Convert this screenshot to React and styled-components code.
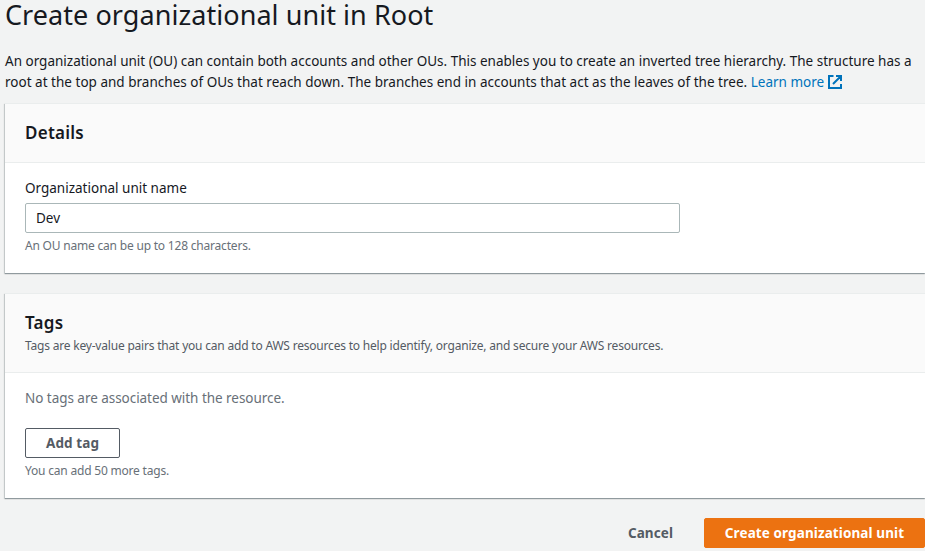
import React from "react";
import styled, { createGlobalStyle } from "styled-components";

const Global = createGlobalStyle`
  * { box-sizing: border-box; }
  html, body { margin: 0; background: #f2f3f3; }
  body { font-family: "Noto Sans", sans-serif; font-size: 13.5px; line-height: 22px; color: #16191f; }
  h1, h2, p { margin: 0; }
`;
const Page = styled.main`
  width: 925px; height: 551px; padding-left: 5px; background: #f2f3f3;
`;
const Title = styled.h1`
  height: 51px; font-size: 27px; line-height: 29px; font-weight: 400; white-space: nowrap;
  letter-spacing: 0.06px;
`;
const Intro = styled.p`
  height: 52px; line-height: 21px;
`;
const Line = styled.span`
  display: block; white-space: nowrap; letter-spacing: ${(p) => p.$ls || 0}px;
`;
const Link = styled.a`
  color: #0073bb; text-decoration: none;
  svg { vertical-align: -2px; margin-left: 4px; }
`;
const Panel = styled.section`
  height: ${(p) => p.$h}px; margin-bottom: 20px; background: #fff;
  border-top: 1px solid #eaeded; box-shadow: 0 1px 1px 0 rgba(0,28,36,.3), -1px 1px 1px 0 rgba(0,28,36,.15);
`;
const PanelHeader = styled.header`
  height: ${(p) => p.$h}px; padding: 18px 20px 0; background: #fafafa; border-bottom: 1px solid #eaeded;
`;
const Heading = styled.h2`
  font-size: 17px; line-height: 22px; font-weight: 600; letter-spacing: 0.25px;
`;
const Small = styled.p`
  margin-top: ${(p) => p.$top || 0}px;
  font-size: 12px; line-height: 22px; letter-spacing: -0.2px; white-space: nowrap;
  color: ${(p) => p.$color || "#687078"};
`;
const Body = styled.div`
  padding: 14px 20px 0;
`;
const Label = styled.label`
  display: block; margin-bottom: 4px;
`;
const Input = styled.input`
  display: block; width: 655px; height: 30px; padding: 0 10px; border: 1px solid #aab7b8; border-radius: 2px;
  font: 13.5px "Noto Sans", sans-serif; color: #16191f; background: #fff;
`;
const Empty = styled.p`
  color: #687078; letter-spacing: -0.04px; margin-bottom: 19px;
`;
const kinds = {
  normal: { border: "#545b64", fill: "#fff", ink: "#545b64" },
  link: { border: "transparent", fill: "transparent", ink: "#545b64" },
  primary: { border: "#ec7211", fill: "#ec7211", ink: "#fff" },
};
const Button = styled.button`
  display: block; height: 30px; width: ${(p) => p.$w}px; padding: 0; border-radius: 2px; white-space: nowrap;
  font: 700 13.5px "Noto Sans", sans-serif; letter-spacing: 0.1px;
  border: 1px solid ${(p) => kinds[p.$kind || "normal"].border};
  background: ${(p) => kinds[p.$kind || "normal"].fill};
  color: ${(p) => kinds[p.$kind || "normal"].ink};
`;
const Actions = styled.footer`
  display: flex; justify-content: flex-end; gap: 10px;
`;

const External = () => (
  <svg width="14" height="14" viewBox="0 0 14 14" fill="none" stroke="#0073bb" strokeWidth="2">
    <path d="M5.5 1H1v12h12V9M8 1h5v5M13 1L5 9" />
  </svg>
);

export default function App() {
  return (
    <Page>
      <Global />
      <Title>Create organizational unit in Root</Title>
      <Intro>
        <Line>An organizational unit (OU) can contain both accounts and other OUs. This enables you to create an inverted tree hierarchy. The structure has a</Line>
        <Line $ls={0.015}>root at the top and branches of OUs that reach down. The branches end in accounts that act as the leaves of the tree. <Link>Learn more<External /></Link></Line>
      </Intro>
      <Panel $h={170}>
        <PanelHeader $h={59}><Heading>Details</Heading></PanelHeader>
        <Body>
          <Label htmlFor="ou">Organizational unit name</Label>
          <Input id="ou" defaultValue="Dev" />
          <Small $top={2}>An OU name can be up to 128 characters.</Small>
        </Body>
      </Panel>
      <Panel $h={205}>
        <PanelHeader $h={79}>
          <Heading>Tags</Heading>
          <Small $top={1} $color="#545b64">Tags are key-value pairs that you can add to AWS resources to help identify, organize, and secure your AWS resources.</Small>
        </PanelHeader>
        <Body>
          <Empty>No tags are associated with the resource.</Empty>
          <Button $w={95}>Add tag</Button>
          <Small $top={2}>You can add 50 more tags.</Small>
        </Body>
      </Panel>
      <Actions>
        <Button $kind="link" $w={87}>Cancel</Button>
        <Button $kind="primary" $w={221}>Create organizational unit</Button>
      </Actions>
    </Page>
  );
}
